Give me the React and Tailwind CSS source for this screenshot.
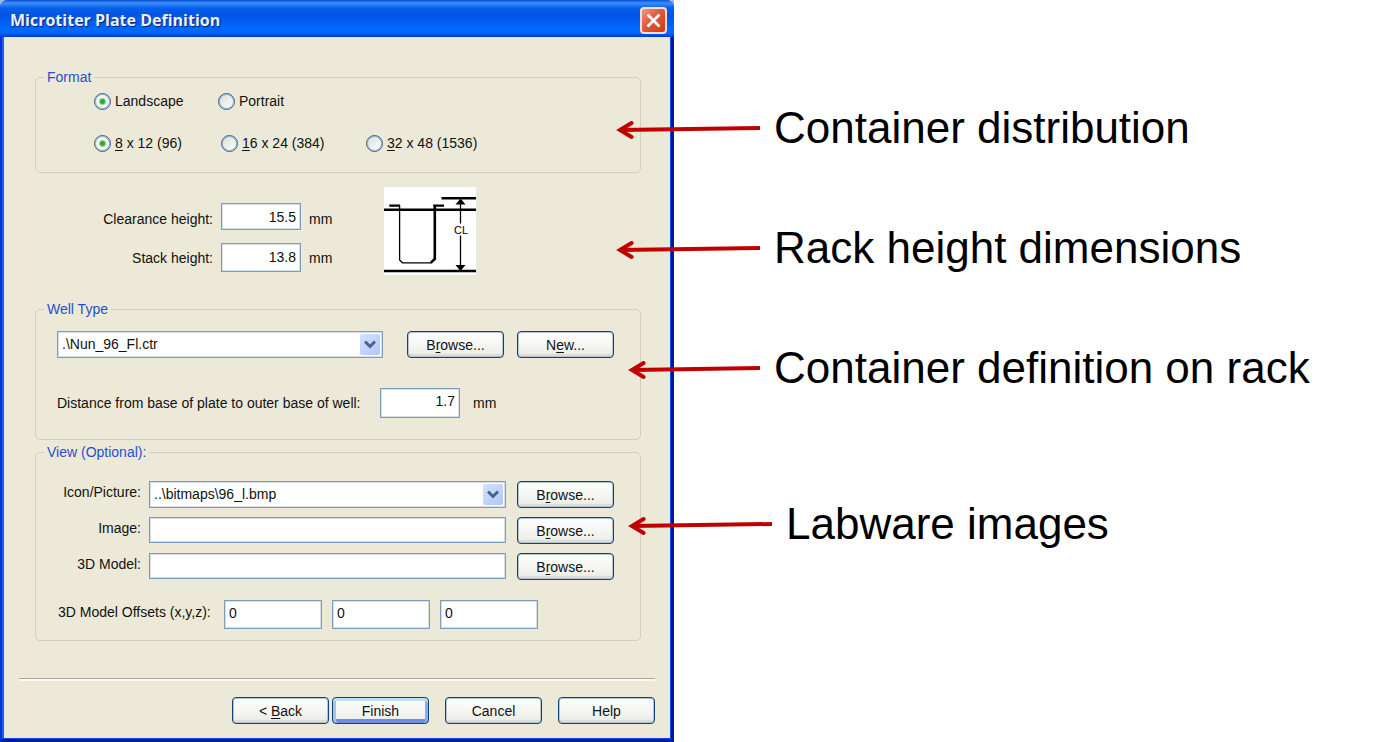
import React from "react";

function GroupBox({ title, className, children }) {
  return (
    <fieldset className={`min-w-0 rounded-[5px] border border-[#d0d0bf] ${className}`}>
      <legend className="ml-2 px-[3px] leading-5 text-[#1f50d2]">{title}</legend>
      {children}
    </fieldset>
  );
}

function Radio({ name, value, accessKey, rest, defaultChecked }) {
  return (
    <label className="flex h-5 items-center gap-1 whitespace-pre">
      <input
        type="radio"
        name={name}
        value={value}
        defaultChecked={defaultChecked}
        className="size-[17px] shrink-0 appearance-none rounded-full border border-[#35648f] bg-[linear-gradient(135deg,#dcdcd7,#ffffff)] shadow-[inset_0_0_0_1px_#a3b9cc] checked:bg-[radial-gradient(circle,#22a822_0,#35ad35_2px,#f4f6f1_4px,#f4f4f0_100%)]"
      />
      <span>
        {accessKey && <span className="underline underline-offset-2">{accessKey}</span>}
        {rest}
      </span>
    </label>
  );
}

function TextBox({ className, ...props }) {
  return (
    <input
      type="text"
      className={`min-w-0 rounded-none border border-[#7f9db9] bg-white px-1 shadow-[inset_0_0_0_1px_#d3dee8] outline-none ${className}`}
      {...props}
    />
  );
}

function ComboBox({ id, label, value, className }) {
  return (
    <div className={`relative min-w-0 ${className}`}>
      <select
        id={id}
        aria-label={label}
        defaultValue={value}
        className="h-[27px] w-full appearance-none rounded-none border border-[#7f9db9] bg-white pr-6 pb-[2px] pl-1 shadow-[inset_0_0_0_1px_#d3dee8] outline-none"
      >
        <option value={value}>{value}</option>
      </select>
      <span className="pointer-events-none absolute top-[3px] right-[3px] flex h-[21px] w-5 items-center justify-center rounded-[2px] bg-[linear-gradient(135deg,#d6e2fd,#afc6f8)]">
        <svg width="12" height="9" viewBox="0 0 12 9" aria-hidden="true">
          <path d="M1 1.5 L6 6.5 L11 1.5" fill="none" stroke="#4b6189" strokeWidth="3" />
        </svg>
      </span>
    </div>
  );
}

function Button({ primary, children }) {
  const ring = primary
    ? "shadow-[inset_0_3px_0_#c4dcfb,inset_3px_0_0_#a5c1f2,inset_-3px_0_0_#8aaae9,inset_0_-4px_0_#6c8ce6]"
    : "shadow-[inset_0_0_0_1px_#b4c3d0,inset_0_-3px_1px_#dedbd0]";
  return (
    <button
      type="button"
      className={`h-[27px] w-[97px] shrink-0 rounded-[4px] border border-[#0f4478] bg-[linear-gradient(#ffffff,#f4f4f0_60%,#ebebe5)] pt-[2px] text-center leading-[23px] whitespace-nowrap ${ring}`}
    >
      {children}
    </button>
  );
}

function Key({ children }) {
  return <span className="underline underline-offset-2">{children}</span>;
}

function BrowseButton() {
  return (
    <Button>
      B<Key>r</Key>owse...
    </Button>
  );
}

function WellDiagram() {
  return (
    <svg width="92" height="88" viewBox="0 0 92 88" role="img" aria-label="Clearance height diagram" className="shrink-0">
      <rect width="92" height="88" fill="#fff" />
      <g fill="none" stroke="#000">
        <path d="M57.5 11.3 H92 M0 22.7 H92 M0 84 H92" strokeWidth="2.4" />
        <path d="M5.3 18.7 H16 M49.3 18.7 H60" strokeWidth="2.2" />
        <path d="M15.6 18 V73 L18.5 75.8 H48" strokeWidth="1.3" />
        <path d="M50.8 18 V72 L47 75.6" strokeWidth="2.6" />
        <path d="M76.5 13 V36.5 M76.5 48.5 V83" strokeWidth="1.3" />
      </g>
      <path d="M76.5 11.5 L81.5 17.5 H71.5 Z M76.5 84 L81.5 78 H71.5 Z" />
      <text x="70" y="47" fontSize="11" fontFamily="Liberation Sans, Arial, sans-serif">CL</text>
    </svg>
  );
}

function PlateDialog() {
  return (
    <div className="bg-[#9db7ea]">
      <section
        aria-label="Microtiter Plate Definition"
        className="overflow-hidden rounded-t-[8px] bg-[#0a2fcf] text-[14px] leading-5 text-[#111]"
      >
        <header className="flex h-[37px] items-center justify-between bg-[linear-gradient(#0a4fd0_0,#3b8efc_3px,#2a7df5_5px,#0560ea_8px,#0055e2_14px,#005cf0_22px,#0069ff_28px,#0066fb_33px,#0046d8_36px,#0038c4_37px)] pt-[3px] pr-[7px] pl-[10px]">
          <h1 className="font-['Open_Sans','Noto_Sans',sans-serif] text-[16px] font-bold text-[#eef1fb] [text-shadow:1px_1px_1px_#0a1e80]">
            Microtiter Plate Definition
          </h1>
          <button
            type="button"
            aria-label="Close"
            className="flex size-[27px] items-center justify-center rounded-[4px] border-2 border-[#f3ddda] bg-[linear-gradient(135deg,#ee9a80,#e2583a_45%,#cf3a10)]"
          >
            <svg width="15" height="15" viewBox="0 0 15 15" aria-hidden="true">
              <path d="M1.5 1.5 L13.5 13.5 M13.5 1.5 L1.5 13.5" stroke="#fff" strokeWidth="2.8" />
            </svg>
          </button>
        </header>

        <div className="border-r-[3px] border-b-[3px] border-l-2 border-r-[#0018a0] border-b-[#001a9c] border-l-[#0831d9]">
          <div className="border-r border-b border-l-2 border-r-[#1050e0] border-b-[#0a4ae0] border-l-[#1464ee] bg-[#ece9d8]">
            <form className="pt-[30px] pr-[29px] pl-[31px]">
              <GroupBox title="Format" className="pb-[19px]">
                <div className="grid gap-[22px] pt-1 pl-[58px]">
                  <div className="grid grid-cols-[124px_auto] justify-start">
                    <Radio name="orientation" value="landscape" rest="Landscape" defaultChecked />
                    <Radio name="orientation" value="portrait" rest="Portrait" />
                  </div>
                  <div className="grid grid-cols-[127px_145px_auto] justify-start">
                    <Radio name="wells" value="96" accessKey="8" rest=" x 12 (96)" defaultChecked />
                    <Radio name="wells" value="384" accessKey="1" rest="6 x 24 (384)" />
                    <Radio name="wells" value="1536" accessKey="3" rest="2 x 48 (1536)" />
                  </div>
                </div>
              </GroupBox>

              <div className="flex gap-[52px] pt-[14px] pb-6 pl-[65px]">
                <div className="grid grid-cols-[113px_80px_auto] content-start items-center gap-x-2 gap-y-[13px] pt-4">
                  <label htmlFor="clearance" className="pt-1 text-right">Clearance height:</label>
                  <TextBox id="clearance" defaultValue="15.5" className="h-[27px] text-right" />
                  <span className="pt-1">mm</span>
                  <label htmlFor="stack" className="text-right">Stack height:</label>
                  <TextBox id="stack" defaultValue="13.8" className="h-[29px] pb-[2px] text-right" />
                  <span>mm</span>
                </div>
                <WellDiagram />
              </div>

              <GroupBox title="Well Type" className="pb-[21px]">
                <div className="flex gap-[13px] pt-3 pr-[26px] pl-[21px]">
                  <ComboBox label="Well type" value=".\Nun_96_Fl.ctr" className="mr-[11px] flex-1" />
                  <BrowseButton />
                  <Button>
                    N<Key>e</Key>w...
                  </Button>
                </div>
                <div className="flex items-center pt-[30px] pl-[21px]">
                  <label htmlFor="distance" className="w-[323px]">
                    Distance from base of plate to outer base of well:
                  </label>
                  <TextBox id="distance" defaultValue="1.7" className="h-[30px] w-20 pb-1 text-right" />
                  <span className="pl-[13px]">mm</span>
                </div>
              </GroupBox>

              <GroupBox title="View (Optional):" className="mt-[2px] pb-[11px]">
                <div className="grid gap-2 pt-[19px] pr-[26px] pl-[21px]">
                  <div className="flex h-7 items-start">
                    <label htmlFor="icon" className="w-[84px] text-right leading-[22px]">Icon/Picture:</label>
                    <ComboBox id="icon" value="..\bitmaps\96_l.bmp" className="mr-[11px] ml-2 flex-1" />
                    <BrowseButton />
                  </div>
                  <div className="flex h-7 items-start">
                    <label htmlFor="image" className="w-[84px] text-right leading-[22px]">Image:</label>
                    <TextBox id="image" className="mr-[11px] ml-2 h-[26px] flex-1" />
                    <BrowseButton />
                  </div>
                  <div className="flex h-7 items-start">
                    <label htmlFor="model" className="w-[84px] text-right leading-[22px]">3D Model:</label>
                    <TextBox id="model" className="mr-[11px] ml-2 h-[26px] flex-1" />
                    <BrowseButton />
                  </div>
                </div>
                <div className="flex gap-[10px] pt-[19px] pl-[22px]">
                  <label htmlFor="offset-x" className="w-[156px] leading-6">3D Model Offsets (x,y,z):</label>
                  <TextBox id="offset-x" defaultValue="0" className="h-[29px] w-[98px] pb-1" />
                  <TextBox aria-label="Offset y" defaultValue="0" className="h-[29px] w-[98px] pb-1" />
                  <TextBox aria-label="Offset z" defaultValue="0" className="h-[29px] w-[98px] pb-1" />
                </div>
              </GroupBox>
            </form>

            <footer className="px-[15px] pt-[37px] pb-[14px]">
              <hr className="h-[3px] border-t border-b-2 border-t-[#aca899] border-b-[#faf9f5]" />
              <div className="flex justify-end gap-4 pt-4">
                <div className="flex gap-[3px]">
                  <Button>
                    &lt; <Key>B</Key>ack
                  </Button>
                  <Button primary>Finish</Button>
                </div>
                <Button>Cancel</Button>
                <Button>Help</Button>
              </div>
            </footer>
          </div>
        </div>
      </section>
    </div>
  );
}

function Callout({ length, className = "", children }) {
  return (
    <li className={`flex items-center gap-[14px] ${className}`}>
      <svg width={length} height="24" viewBox={`0 0 ${length} 24`} className="shrink-0" aria-hidden="true">
        <g fill="none" stroke="#c00000" strokeWidth="4">
          <path d={`M4 14 L${length} 12`} />
          <path d="M15.6 7 L4 14 L15.6 21" strokeLinecap="round" />
        </g>
      </svg>
      <span>{children}</span>
    </li>
  );
}

export default function App() {
  return (
    <main className="flex min-h-screen items-start bg-white font-['Liberation_Sans',Arial,sans-serif]">
      <div className="flex-[0_1_674px]">
        <PlateDialog />
      </div>
      <ul className="z-10 -ml-[58px] pt-[104px] text-[44px] leading-[48px] whitespace-nowrap text-black">
        <Callout length={144} className="mb-[72px]">Container distribution</Callout>
        <Callout length={144} className="mb-[72px]">Rack height dimensions</Callout>
        <Callout length={132} className="mb-[108px] ml-3">Container definition on rack</Callout>
        <Callout length={144} className="ml-3">Labware images</Callout>
      </ul>
    </main>
  );
}
